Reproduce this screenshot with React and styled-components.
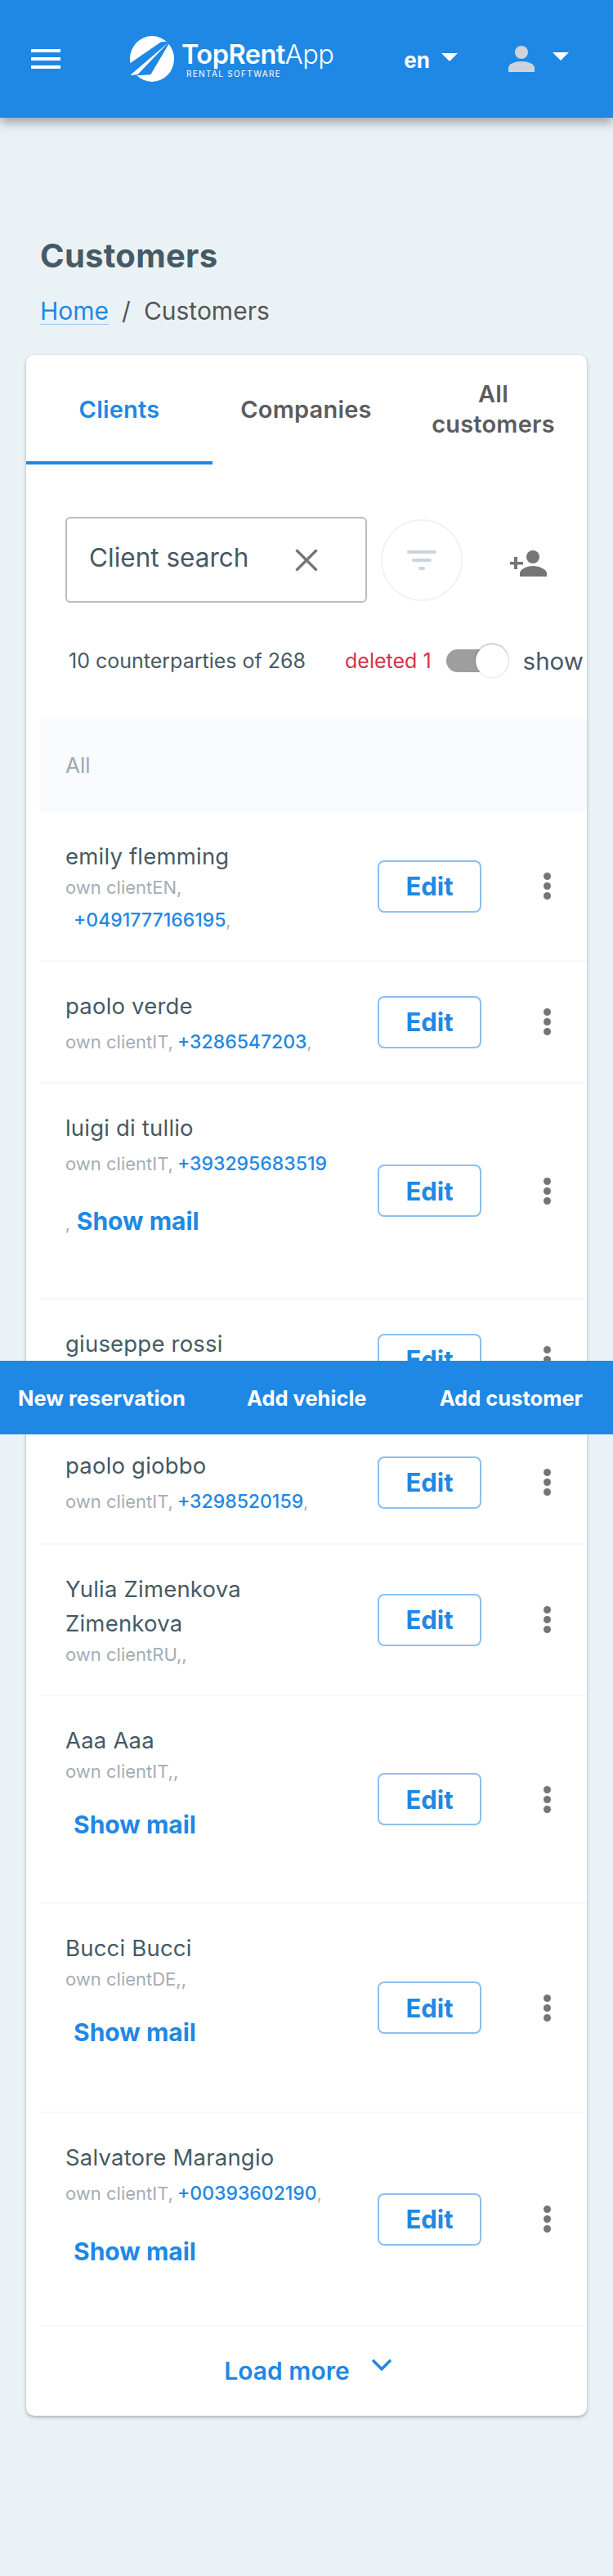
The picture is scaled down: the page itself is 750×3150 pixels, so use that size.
import React from "react";
import styled, { createGlobalStyle } from "styled-components";

const font = `Inter, "Open Sans", sans-serif`;

const Global = createGlobalStyle`
  html, body {
    margin: 0;
    padding: 0;
    background: #ebf2f6;
  }
  * {
    box-sizing: border-box;
  }
`;

const customers = [
  { name: "emily flemming", type: "own clientEN,", phone: "+0491777166195", after: ",", wrap: true, h: 183 },
  { name: "paolo verde", type: "own clientIT,", phone: "+3286547203", after: ",", h: 149 },
  { name: "luigi di tullio", type: "own clientIT,", phone: "+393295683519", mail: true, comma: true, h: 264 },
  // the action bar covers the rest of this row in the design
  { name: "giuseppe rossi", h: 149 },
  { name: "paolo giobbo", type: "own clientIT,", phone: "+3298520159", after: ",", h: 151 },
  { name: "Yulia Zimenkova Zimenkova", type: "own clientRU,,", plain: true, h: 185 },
  { name: "Aaa Aaa", type: "own clientIT,,", plain: true, mail: true, h: 254 },
  { name: "Bucci Bucci", type: "own clientDE,,", plain: true, mail: true, h: 256 },
  { name: "Salvatore Marangio", type: "own clientIT,", phone: "+00393602190", after: ",", mail: true, h: 261 },
];

const Page = styled.div`
  position: relative;
  width: 750px;
  height: 3150px;
  font-family: ${font};
  color: #455a64;
  overflow: hidden;
`;

const Header = styled.header`
  height: 144px;
  background: #1f88e5;
  box-shadow: 0 6px 12px rgba(60, 70, 80, 0.45);
  display: flex;
  align-items: center;
  padding: 0 54px 0 38px;
  color: #fff;
`;

const Burger = styled.div`
  width: 36px;
  height: 24px;
  margin-top: -1px;
  display: flex;
  flex-direction: column;
  justify-content: space-between;
  span {
    display: block;
    height: 4px;
    background: #fff;
  }
`;

const Logo = styled.div`
  display: flex;
  align-items: center;
  margin-left: 84px;
  width: 337px;
  gap: 8px;
`;

const LogoText = styled.div`
  display: flex;
  flex-direction: column;
  margin-top: 2px;
`;

const LogoName = styled.div`
  font-size: 32.5px;
  line-height: 34px;
  font-weight: 600;
  letter-spacing: -0.5px;
  white-space: nowrap;
  span {
    font-weight: 300;
  }
`;

const LogoSub = styled.div`
  font-size: 10px;
  line-height: 12px;
  letter-spacing: 1.35px;
  margin-left: 6px;
  white-space: nowrap;
`;

const Lang = styled.div`
  font-size: 26px;
  font-weight: 700;
  display: flex;
  align-items: center;
  gap: 14px;
  margin-top: 2px;
`;

const Caret = styled.i`
  display: block;
  width: 0;
  height: 0;
  margin-top: -6px;
  border-left: 10px solid transparent;
  border-right: 10px solid transparent;
  border-top: 10px solid #fff;
`;

const UserMenu = styled.div`
  display: flex;
  align-items: center;
  gap: 22px;
  margin-left: 62px;
`;

const Main = styled.main`
  padding: 144px 32px 0;
`;

const Title = styled.h1`
  margin: 0 0 0 17px;
  font-size: 40px;
  line-height: 50px;
  font-weight: 700;
  letter-spacing: 0.3px;
  color: #455a64;
`;

const Crumbs = styled.div`
  margin: 24px 0 0 17px;
  height: 36px;
  font-size: 30px;
  line-height: 36px;
  color: #555;
  display: flex;
  gap: 16px;
  a {
    color: #1f88e5;
    text-decoration: none;
    border-bottom: 1px solid #92c3f1;
    height: 35px;
  }
`;

const Card = styled.section`
  margin-top: 36px;
  height: 2520px;
  background: #fff;
  border-radius: 10px;
  box-shadow: 0 2px 4px rgba(70, 80, 90, 0.4);
`;

const Tabs = styled.div`
  display: grid;
  grid-template-columns: 228px 229px 229px;
  height: 134px;
`;

const Tab = styled.div`
  display: flex;
  align-items: center;
  justify-content: center;
  text-align: center;
  padding: 2px 26px 0;
  font-size: 29px;
  line-height: 37px;
  font-weight: 600;
  letter-spacing: 0.2px;
  color: ${(p) => (p.$active ? "#1f88e5" : "#5c5c5c")};
  border-bottom: 4px solid ${(p) => (p.$active ? "#1f88e5" : "transparent")};
`;

const Tools = styled.div`
  display: flex;
  align-items: center;
  margin: 64px 0 0 48px;
`;

const Search = styled.div`
  width: 369px;
  height: 105px;
  border: 2px solid #bdbdbd;
  border-radius: 6px;
  display: flex;
  align-items: flex-start;
  justify-content: space-between;
  padding: 27px 58px 0 27px;
  font-size: 31.5px;
  line-height: 42px;
  color: #455a64;
  svg {
    margin-top: 10px;
  }
`;

const FilterBtn = styled.div`
  width: 100px;
  height: 100px;
  margin-left: 17px;
  border: 2px solid #edf3f8;
  border-radius: 50%;
  display: flex;
  align-items: center;
  justify-content: center;
`;

const AddUser = styled.div`
  margin: 8px 0 0 58px;
  display: flex;
`;

const Counts = styled.div`
  display: flex;
  align-items: center;
  height: 44px;
  margin: 49px 0 0 52px;
  font-size: 25px;
  white-space: nowrap;
`;

const Deleted = styled.span`
  margin-left: 48px;
  color: #dc2f4b;
`;

const Toggle = styled.div`
  position: relative;
  width: 64px;
  height: 28px;
  margin-left: 18px;
  border-radius: 14px;
  background: #9e9e9e;
`;

const Knob = styled.div`
  position: absolute;
  top: -6px;
  left: 36px;
  width: 40px;
  height: 40px;
  border-radius: 50%;
  background: #fff;
  box-shadow: 0 -1px 2px rgba(0, 0, 0, 0.35), 0 1px 3px rgba(0, 0, 0, 0.08);
`;

const ShowLabel = styled.span`
  margin-left: 30px;
  font-size: 29.5px;
`;

const AllHead = styled.div`
  height: 114px;
  margin: 49px 0 0 16px;
  padding: 0 0 2px 32px;
  background: #f9fbfd;
  display: flex;
  align-items: center;
  font-size: 26px;
  color: #9aa9b5;
`;

const List = styled.div`
  margin-left: 16px;
`;

const Row = styled.div`
  height: ${(p) => p.$h}px;
  display: flex;
  align-items: center;
  border-bottom: 2px solid #f5f9fc;
`;

const Info = styled.div`
  width: 414px;
  align-self: flex-start;
  padding: 33px 0 0 32px;
`;

const Name = styled.div`
  font-size: 27.5px;
  line-height: 42px;
  color: #455a64;
  letter-spacing: 0.2px;
  width: 320px;
`;

const Meta = styled.div`
  font-size: 22px;
  line-height: ${(p) => (p.$plain ? 34 : 44)}px;
  color: #a3adb5;
  white-space: nowrap;
`;

const Phone = styled.a`
  display: ${(p) => (p.$wrap ? "block" : "inline")};
  margin-left: ${(p) => (p.$wrap ? 10 : 5)}px;
  font-size: 23px;
  line-height: 46px;
  font-weight: 500;
  color: #1f88e5;
  small {
    font-size: 20px;
    font-weight: 400;
    color: #a3adb5;
  }
`;

const ShowMail = styled.div`
  padding-top: ${(p) => (p.$plain ? 28 : 27)}px;
  font-size: 30px;
  line-height: 40px;
  font-weight: 700;
  color: #1f88e5;
  padding-left: ${(p) => (p.$comma ? 0 : 10)}px;
  small {
    font-size: 20px;
    font-weight: 400;
    color: #a3adb5;
    margin-right: 8px;
  }
`;

const EditBtn = styled.button`
  width: 127px;
  height: 64px;
  padding: 0;
  background: #fff;
  border: 2px solid #8cc0f0;
  border-radius: 8px;
  font-family: ${font};
  font-size: 31px;
  font-weight: 700;
  color: #1f88e5;
`;

const Kebab = styled.div`
  margin-left: 76px;
  display: flex;
  flex-direction: column;
  gap: 3px;
  span {
    width: 9px;
    height: 9px;
    border-radius: 50%;
    background: #757575;
  }
`;

const LoadMore = styled.div`
  display: flex;
  justify-content: center;
  align-items: center;
  gap: 26px;
  height: 108px;
  padding: 0 0 0 4px;
  font-size: 30px;
  font-weight: 600;
  color: #1f88e5;
  svg {
    margin-top: -14px;
  }
`;

const ActionBar = styled.div`
  position: absolute;
  top: 1664px;
  left: 0;
  width: 750px;
  height: 90px;
  background: #1f88e5;
  display: flex;
  align-items: center;
  justify-content: space-between;
  padding: 0 37px 0 22px;
  color: #fff;
  font-size: 25.5px;
  font-weight: 700;
  span:nth-child(2) {
    margin-right: 14px;
  }
`;

const LogoMark = () => (
  <svg width="56" height="58" viewBox="0 0 56 58" style={{ overflow: "visible" }}>
    <ellipse cx="28" cy="29" rx="27" ry="28" fill="#fff" />
    <path d="M50.3 7.7 39 8.3-1 35.7V50L26.3 48.3Z" fill="#1f88e5" />
    <path d="M48 9 1.3 49 10.3 48.3Z" fill="#fff" />
  </svg>
);

const UserIcon = () => (
  <svg width="32" height="33" viewBox="0 0 32 33">
    <circle cx="16" cy="8" r="8" fill="#ccd3dc" />
    <path d="M0 32V27C0 22 8 19 16 19S32 22 32 27V32Z" fill="#ccd3dc" />
  </svg>
);

const FilterIcon = () => (
  <svg width="36" height="24" viewBox="0 0 36 24" fill="#ccd5de">
    <rect x="0" y="0" width="36" height="4" rx="2" />
    <rect x="6" y="10" width="24" height="4" rx="2" />
    <rect x="14" y="20" width="8" height="4" rx="2" />
  </svg>
);

const AddUserIcon = () => (
  <svg width="45" height="33" viewBox="0 0 45 33" fill="#757575">
    <circle cx="28" cy="9" r="8" />
    <path d="M12 33V29C12 24 21 20 28 20S45 24 45 29V33Z" />
    <path d="M5 9H9V15H16V18.5H9V24H5V18.5H0V15H5Z" />
  </svg>
);

const CloseIcon = () => (
  <svg width="28" height="28" viewBox="0 0 28 28" stroke="#757575" strokeWidth="3.2" fill="none">
    <path d="M1.5 1.5 26.5 26.5M26.5 1.5 1.5 26.5" />
  </svg>
);

const Chevron = () => (
  <svg width="26" height="16" viewBox="0 0 26 16" fill="none" stroke="#1f88e5" strokeWidth="3.5">
    <path d="M2 2 13 13 24 2" />
  </svg>
);

const CustomerRow = ({ c }) => (
  <Row $h={c.h}>
    <Info>
      <Name>{c.name}</Name>
      {c.type && (
        <Meta $plain={c.plain || c.wrap}>
          {c.type}
          {c.phone && (
            <Phone $wrap={c.wrap}>
              {c.phone}
              {c.after && <small>{c.after}</small>}
            </Phone>
          )}
        </Meta>
      )}
      {c.mail && (
        <ShowMail $comma={c.comma} $plain={c.plain}>
          {c.comma && <small>,</small>}
          Show mail
        </ShowMail>
      )}
    </Info>
    <EditBtn>Edit</EditBtn>
    <Kebab>
      <span />
      <span />
      <span />
    </Kebab>
  </Row>
);

const App = () => {
  return (
    <Page>
      <Global />
      <Header>
        <Burger>
          <span />
          <span />
          <span />
        </Burger>
        <Logo>
          <LogoMark />
          <LogoText>
            <LogoName>
              TopRent<span>App</span>
            </LogoName>
            <LogoSub>RENTAL SOFTWARE</LogoSub>
          </LogoText>
        </Logo>
        <Lang>
          en
          <Caret />
        </Lang>
        <UserMenu>
          <UserIcon />
          <Caret />
        </UserMenu>
      </Header>
      <Main>
        <Title>Customers</Title>
        <Crumbs>
          <a>Home</a>
          <span>/</span>
          <span>Customers</span>
        </Crumbs>
        <Card>
          <Tabs>
            <Tab $active>Clients</Tab>
            <Tab>Companies</Tab>
            <Tab>All customers</Tab>
          </Tabs>
          <Tools>
            <Search>
              Client search
              <CloseIcon />
            </Search>
            <FilterBtn>
              <FilterIcon />
            </FilterBtn>
            <AddUser>
              <AddUserIcon />
            </AddUser>
          </Tools>
          <Counts>
            10 counterparties of 268
            <Deleted>deleted 1</Deleted>
            <Toggle>
              <Knob />
            </Toggle>
            <ShowLabel>show</ShowLabel>
          </Counts>
          <AllHead>All</AllHead>
          <List>
            {customers.map((c) => (
              <CustomerRow key={c.name} c={c} />
            ))}
          </List>
          <LoadMore>
            Load more
            <Chevron />
          </LoadMore>
        </Card>
      </Main>
      <ActionBar>
        <span>New reservation</span>
        <span>Add vehicle</span>
        <span>Add customer</span>
      </ActionBar>
    </Page>
  );
};

export default App;
